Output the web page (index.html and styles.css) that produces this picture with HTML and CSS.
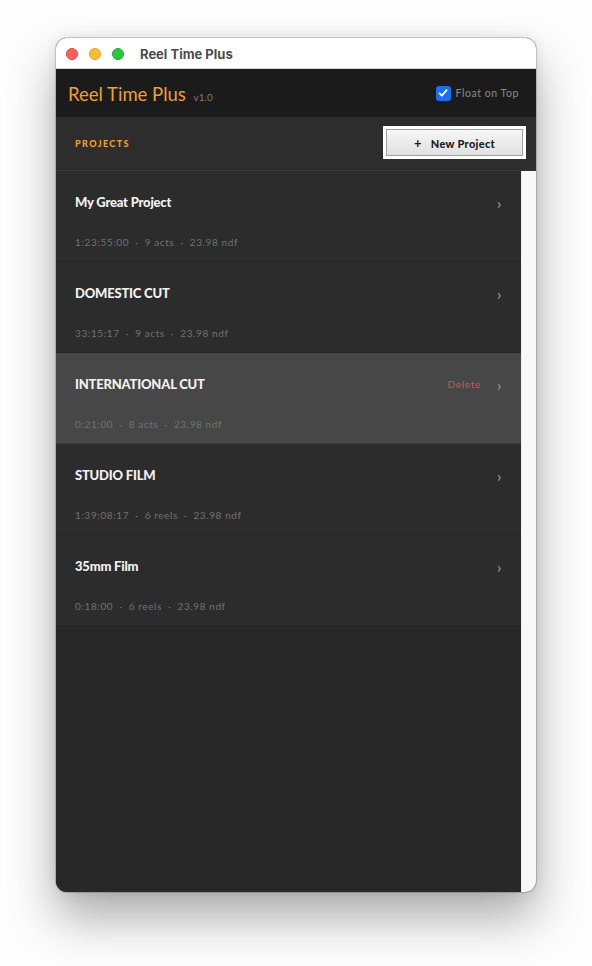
FILE: index.html
```html
<!DOCTYPE html>
<html>
<head>
<meta charset="utf-8">
<link rel="stylesheet" href="styles.css">
</head>
<body>
<div class="window">
  <div class="titlebar">
    <span class="light red"></span>
    <span class="light yellow"></span>
    <span class="light green"></span>
    <span class="wintitle">Reel Time Plus</span>
  </div>
  <div class="header">
    <div class="brand">Reel Time Plus <span class="ver">v1.0</span></div>
    <label class="float">
      <span class="check"><svg width="10" height="10" viewBox="0 0 10 10"><path d="M1.6 5.3 L4 7.7 L8.6 2.2" fill="none" stroke="#fff" stroke-width="1.8" stroke-linecap="round" stroke-linejoin="round"/></svg></span>
      Float on Top
    </label>
  </div>
  <div class="bar">
    <span class="section">PROJECTS</span>
    <div class="btnwrap"><button class="newbtn"><span class="plus">+</span>New Project</button></div>
  </div>
  <div class="body">
    <div class="list">
      <div class="row">
        <div class="top"><span class="name">My Great Project</span><span class="chev">›</span></div>
        <div class="meta">1:23:55:00 <i>·</i> 9 acts <i>·</i> 23.98 ndf</div>
      </div>
      <div class="row">
        <div class="top"><span class="name">DOMESTIC CUT</span><span class="chev">›</span></div>
        <div class="meta">33:15:17 <i>·</i> 9 acts <i>·</i> 23.98 ndf</div>
      </div>
      <div class="row active">
        <div class="top"><span class="name">INTERNATIONAL CUT</span><span class="del">Delete</span><span class="chev">›</span></div>
        <div class="meta">0:21:00 <i>·</i> 8 acts <i>·</i> 23.98 ndf</div>
      </div>
      <div class="row">
        <div class="top"><span class="name">STUDIO FILM</span><span class="chev">›</span></div>
        <div class="meta">1:39:08:17 <i>·</i> 6 reels <i>·</i> 23.98 ndf</div>
      </div>
      <div class="row">
        <div class="top"><span class="name">35mm Film</span><span class="chev">›</span></div>
        <div class="meta">0:18:00 <i>·</i> 6 reels <i>·</i> 23.98 ndf</div>
      </div>
    </div>
    <div class="scroll"></div>
  </div>
</div>
</body>
</html>
```

FILE: styles.css
```css
html, body {
  margin: 0;
  padding: 0;
  background: #fdfdfd;
}
body {
  padding: 38px 0 0 56px;
  min-height: 966px;
  box-sizing: border-box;
  font-family: Lato, "Open Sans", sans-serif;
}
.window {
  width: 480px;
  height: 854px;
  border-radius: 11px;
  overflow: hidden;
  display: flex;
  flex-direction: column;
  background: #282828;
  box-shadow: 0 0 0 1px rgba(0,0,0,0.16), 0 26px 48px rgba(0,0,0,0.32), 0 0 14px rgba(0,0,0,0.10);
}
.titlebar {
  height: 31px;
  flex: none;
  background: #fff;
  display: flex;
  align-items: center;
  padding-left: 10px;
  border-bottom: 1px solid #d8d8d8;
  box-sizing: border-box;
}
.light {
  width: 12px;
  height: 12px;
  border-radius: 50%;
  margin-right: 11px;
  box-sizing: border-box;
  margin-top: 1px;
}
.red { background: #fe5f57; border: 0.5px solid #e0443e; }
.yellow { background: #febc2e; border: 0.5px solid #dea123; }
.green { background: #28c840; border: 0.5px solid #1aab29; margin-right: 16px; }
.wintitle {
  font-family: Inter, "Liberation Sans", sans-serif;
  font-weight: 700;
  font-size: 13px;
  color: #4c4c4c;
  margin-top: 2px;
}
.header {
  height: 48px;
  flex: none;
  background: #1b1b1b;
  display: flex;
  align-items: center;
  justify-content: space-between;
  padding: 0 17px 0 12px;
}
.brand {
  color: #f0a02c;
  font-size: 18.5px;
  font-weight: 400;
  padding-top: 2px;
}
.ver {
  font-size: 10px;
  color: #7a7a7a;
  margin-left: 3px;
}
.float {
  display: flex;
  align-items: center;
  font-size: 10.5px;
  color: #8a8a8a;
  letter-spacing: 0.55px;
}
.check {
  width: 15px;
  height: 15px;
  border-radius: 3px;
  background: #1c6ef2;
  display: flex;
  align-items: center;
  justify-content: center;
  margin-right: 5px;
}
.bar {
  height: 54px;
  flex: none;
  background: #2d2d2d;
  display: flex;
  align-items: center;
  justify-content: space-between;
  padding: 0 10px 0 19px;
  box-sizing: border-box;
  border-bottom: 1px solid #343434;
}
.section {
  color: #f0a02c;
  font-weight: 900;
  font-size: 9px;
  letter-spacing: 1.4px;
}
.btnwrap {
  background: #fff;
  padding: 3px;
  margin-top: -2px;
}
.newbtn {
  width: 137px;
  height: 27px;
  border: 1px solid #a0a0a0;
  background: linear-gradient(#f6f6f6, #e1e1e1);
  font-family: Lato, sans-serif;
  font-weight: 900;
  font-size: 11px;
  color: #1c1c1c;
  display: flex;
  align-items: center;
  justify-content: center;
  letter-spacing: 0.3px;
  padding: 1px 0 0;
}
.plus {
  font-size: 13px;
  margin-right: 9px;
  font-weight: 700;
}
.body {
  flex: 1;
  display: flex;
}
.list {
  flex: 1;
  background: #282828;
}
.scroll {
  width: 15px;
  background: #f8f8f8;
  border-left: 1px solid #ececec;
  box-sizing: border-box;
}
.row {
  height: 91px;
  box-sizing: border-box;
  background: #2c2c2c;
  border-bottom: 1px solid #252525;
  padding: 23px 16px 0 19px;
}
.row.active {
  background: #474747;
  border-bottom-color: #3d3d3d;
}
.top {
  display: flex;
  align-items: center;
  height: 16px;
}
.name {
  flex: 1;
  color: #f2f2f2;
  font-weight: 900;
  font-size: 13px;
  letter-spacing: -0.2px;
}
.del {
  color: #d4535a;
  font-size: 10px;
  letter-spacing: 0.7px;
  margin-right: 16px;
}
.chev {
  color: #8c8c8c;
  font-size: 15px;
  font-weight: 700;
  width: 8px;
  margin-top: 2px;
}
.meta {
  margin-top: 26px;
  color: #727272;
  font-size: 10px;
  letter-spacing: 0.6px;
}
.meta i {
  font-style: normal;
  margin: 0 3px;
}
```
